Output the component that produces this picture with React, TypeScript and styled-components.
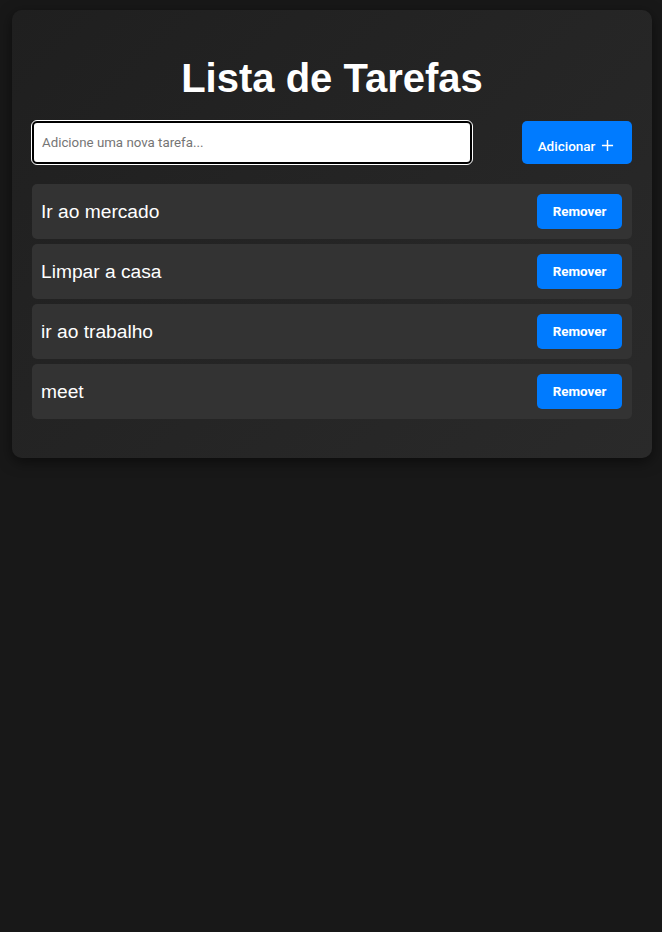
import React, { useState } from "react";
import styled, { createGlobalStyle } from "styled-components";

const GlobalStyle = createGlobalStyle`
  html, body {
    margin: 0;
    padding: 0;
    background: #181818;
    font-family: "Liberation Sans", Arial, sans-serif;
    min-height: 100vh;
  }
`;

const Page = styled.div`
  padding: 10px 10px 0 12px;
  display: flex;
  flex-direction: column;
`;

const Card = styled.div`
  background: linear-gradient(135deg, #1f1f1f 0%, #2a2a2a 100%);
  border-radius: 10px;
  box-shadow: 0 4px 14px rgba(0, 0, 0, 0.5);
  padding: 40px 20px 39px;
  display: flex;
  flex-direction: column;
`;

const Title = styled.h1`
  margin: 0 0 15px;
  text-align: center;
  color: #fff;
  font-size: 40px;
  line-height: 56px;
  font-weight: 700;
`;

const Form = styled.div`
  display: flex;
  align-items: flex-start;
  gap: 50px;
  margin-bottom: 20px;
`;

const Input = styled.input`
  flex: 1;
  height: 43px;
  box-sizing: border-box;
  border: 2px solid #000;
  outline: 1px solid #fff;
  border-radius: 5px;
  padding: 0 8px;
  font-family: Roboto, sans-serif;
  font-size: 13.3px;
  color: #222;
  background: #fff;
  &::placeholder {
    color: #757575;
  }
`;

const Button = styled.button<{ $small?: boolean }>`
  background: #007bff;
  color: #fff;
  border: none;
  border-radius: 5px;
  font-family: Roboto, sans-serif;
  cursor: pointer;
  display: flex;
  align-items: center;
  justify-content: center;
  gap: 6px;
  width: ${(p) => (p.$small ? "85px" : "110px")};
  height: ${(p) => (p.$small ? "35px" : "43px")};
  font-size: ${(p) => (p.$small ? "13.4px" : "13.5px")};
  font-weight: ${(p) => (p.$small ? 700 : 500)};
  padding: ${(p) => (p.$small ? "0" : "6px 2px 0 0")};
  box-sizing: border-box;
`;

const List = styled.ul`
  list-style: none;
  margin: 0;
  padding: 0;
  display: flex;
  flex-direction: column;
  gap: 5px;
`;

const Item = styled.li`
  background: #333;
  border-radius: 5px;
  height: 55px;
  padding: 0 10px 0 9px;
  display: flex;
  align-items: center;
  justify-content: space-between;
  color: #fff;
  font-size: 19.2px;
`;

const ItemText = styled.span`
  margin-top: 0;
`;

const PlusIcon = () => (
  <svg width="13" height="13" viewBox="0 0 14 14" fill="none" stroke="#fff" strokeWidth="1.6">
    <path d="M7 1v12M1 7h12" />
  </svg>
);

export default function App() {
  const [tasks] = useState(["Ir ao mercado", "Limpar a casa", "ir ao trabalho", "meet"]);
  return (
    <>
      <GlobalStyle />
      <Page>
        <Card>
          <Title>Lista de Tarefas</Title>
          <Form>
            <Input placeholder="Adicione uma nova tarefa..." />
            <Button>
              Adicionar <PlusIcon />
            </Button>
          </Form>
          <List>
            {tasks.map((t) => (
              <Item key={t}>
                <ItemText>{t}</ItemText>
                <Button $small>Remover</Button>
              </Item>
            ))}
          </List>
        </Card>
      </Page>
    </>
  );
}
